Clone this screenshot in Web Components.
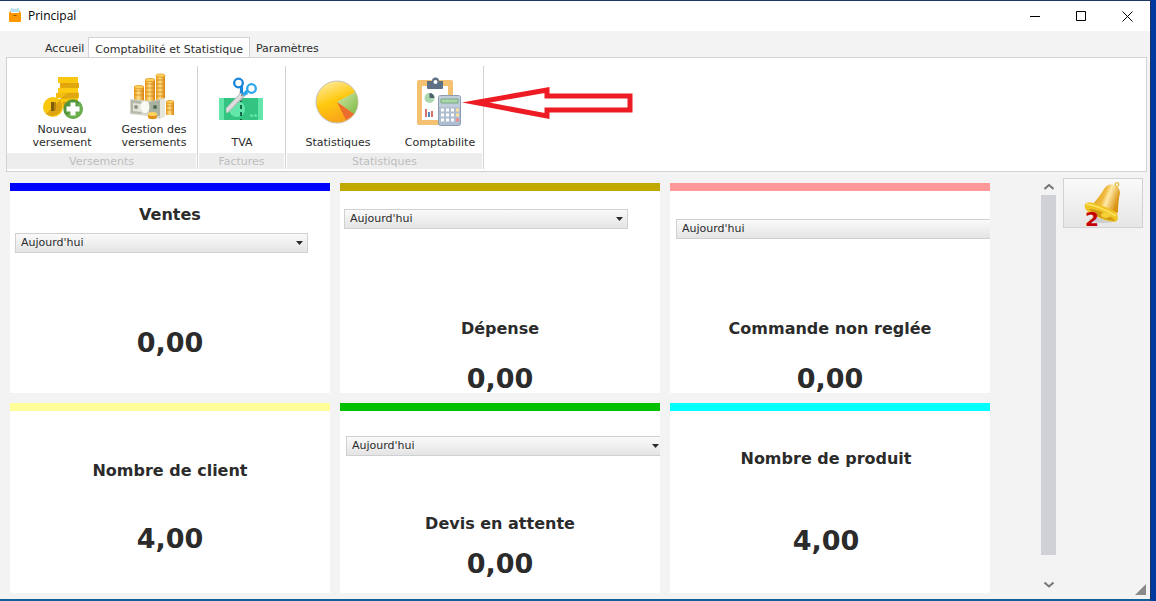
<!DOCTYPE html>
<html lang="fr">
<head>
<meta charset="utf-8">
<title>Principal</title>
<style>
html, body { margin: 0; height: 100%; }
body { font: 11px/14px Verdana, "DejaVu Sans", sans-serif; color: #2b2b2b; background: #003a9f; overflow: hidden; }
</style>
</head>
<body>
<app-window>
  <title-bar slot="title">Principal</title-bar>
  <tab-strip slot="tabs"></tab-strip>
  <ribbon-panel slot="ribbon">
    <ribbon-group label="Versements" style="--start:13px;--gap:8px">
      <ribbon-button icon="coins">Nouveau<br>versement</ribbon-button>
      <ribbon-button icon="cash">Gestion des<br>versements</ribbon-button>
    </ribbon-group>
    <ribbon-group label="Factures" style="--start:1px">
      <ribbon-button icon="tax">TVA</ribbon-button>
    </ribbon-group>
    <ribbon-group label="Statistiques" style="--start:9px;--gap:18px">
      <ribbon-button icon="pie">Statistiques</ribbon-button>
      <ribbon-button icon="report">Comptabilite</ribbon-button>
    </ribbon-group>
    <pointer-arrow></pointer-arrow>
  </ribbon-panel>
  <dash-board>
    <stat-card heading="Ventes" value="0,00" picker="after" style="--accent:#0000ff;--top:12px;--mid:6px;--low:76px;--inset:5px;--picker:calc(100% - 27px)"></stat-card>
    <stat-card heading="Dépense" value="0,00" picker="before" style="--accent:#c0aa00;--top:18px;--mid:88px;--low:24px;--inset:4px;--picker:calc(100% - 36px)"></stat-card>
    <stat-card heading="Commande non reglée" value="0,00" picker="before" style="--accent:#ff9999;--top:28px;--mid:78px;--low:24px;--inset:6px;--picker:calc(100% + 10px)"></stat-card>
    <stat-card heading="Nombre de client" value="4,00" style="--accent:#ffff99;--top:48px;--low:42px"></stat-card>
    <stat-card heading="Devis en attente" value="0,00" picker="before" style="--accent:#00c000;--top:25px;--mid:56px;--low:14px;--inset:6px;--picker:calc(100% - 2px)"></stat-card>
    <stat-card heading="Nombre de produit" value="4,00" style="--accent:#00ffff;--top:36px;--low:56px;--end:8px"></stat-card>
  </dash-board>
  <scroll-rail slot="rail"></scroll-rail>
  <alert-bell slot="side" count="2"></alert-bell>
</app-window>
<script>
const define = (name, render) => customElements.define(name, class extends HTMLElement {
  connectedCallback() {
    if (this.shadowRoot) return;
    this.attachShadow({ mode: 'open' }).innerHTML =
      '<style>*{box-sizing:border-box}button{font:inherit;color:inherit;background:none;border:0;padding:0;margin:0}svg{display:block}</style>' + render(this);
  }
});

const icons = {
  coins: `<svg width="44" height="48" viewBox="-2 0 44 48">
    <path d="M16 5h20v6H16z" fill="#f9c80e"/><path d="M18 11h19v5H18z" fill="#e3a50b"/>
    <path d="M16 16l20-1v6H16z" fill="#fccb12"/><path d="M14 21l22-1 1 6-23 0z" fill="#f4bd0c"/>
    <path d="M29 11l-6 5h14v-5zM25 21h12l-1 6H18z" fill="#e0a810"/>
    <path d="M17 27l19-1v10H15z" fill="#fac80e"/><path d="M21 30h14v6H22z" fill="#d89b10"/>
    <circle cx="11" cy="35" r="10" fill="#f9c80e"/><path d="M18 28a10 10 0 0 1-14 14z" fill="#dda514"/>
    <path d="M9 30h3v9H9z" fill="#805c0c"/><path d="M12 30h2v8l-2 1z" fill="#b98512"/>
    <circle cx="31" cy="37" r="9.700" fill="#54963d"/><path d="M38 30a9.700 9.700 0 0 1-14 14z" fill="#6aae4d"/>
    <path d="M28.500 30.500h5v4h4v5h-4v4h-5v-4h-4v-5h4z" fill="#fff"/></svg>`,
  cash: `<svg width="46" height="48" viewBox="2 0 46 48" overflow="visible">
    <defs><linearGradient id="g"><stop stop-color="#e99a16"/><stop offset=".45" stop-color="#ffe08a"/><stop offset="1" stop-color="#d9800b"/></linearGradient></defs>
    <path d="M5 15h10v20H5z" fill="url(#g)"/><path d="M16 8h10v25H16z" fill="url(#g)"/><path d="M27 3h9v35h-9z" fill="url(#g)"/><path d="M37 30h8v13h-8z" fill="url(#g)"/>
    <g fill="#ffd25a" stroke="#dc8d12" stroke-width=".7"><ellipse cx="10" cy="15" rx="5" ry="1.600"/><ellipse cx="21" cy="8" rx="5" ry="1.600"/><ellipse cx="31.500" cy="3.500" rx="4.700" ry="1.600"/><ellipse cx="41" cy="30" rx="4" ry="1.500"/></g>
    <path d="M5 19h10M5 23h10M16 12h10M16 16h10M16 20h10M16 24h10M27 8h9M27 12h9M27 16h9M27 20h9M27 24h9M37 34h8M37 38h8" stroke="#d8850f" stroke-width=".8"/>
    <path d="M1 27l22 2 13-3v18l-5 3-12-3-18-2z" fill="#d5d6c9"/><path d="M2 28l10 1v13L2 41z" fill="#b4b8aa"/><path d="M4 31l8 1v8l-8-1z" fill="#e4e5da"/>
    <path d="M20 30l11-2v16l-11-1z" fill="#a9b1a0"/><path d="M31 28l5-2v18l-5 3z" fill="#e6e6dc"/><ellipse cx="16" cy="35" rx="4.500" ry="6" fill="#fafaf5"/><circle cx="7" cy="35" r="2" fill="#8b9482"/><circle cx="26" cy="35" r="2" fill="#4d6c4e"/>
    <path d="M19 42v3c0 3 9 3 9 0v-3z" fill="#e09018"/><ellipse cx="23.500" cy="42" rx="4.500" ry="2" fill="#ffd45e"/></svg>`,
  tax: `<svg width="46" height="54" viewBox="1 -2 46 54">
    <path d="M1 24h44v22H1z" fill="#33c481"/><path d="M1 24h5v22H1zM40 24h5v22h-5z" fill="#62e6aa"/><circle cx="19" cy="35" r="8" fill="#62e6aa"/>
    <path d="M23 24v22" stroke="#116849" stroke-width="2" stroke-dasharray="4 3"/><circle cx="33.500" cy="41.500" r="1.500" fill="#62e6aa"/><circle cx="37.500" cy="41.500" r="1.500" fill="#62e6aa"/>
    <path d="M22 15l3 2-1 10-3-2z" fill="#999"/><path d="M24 17l5 3L11 38l-3 1v-5z" fill="#b5b5b5"/><path d="M26 21L9 39l-1-4 15-16z" fill="#ddd"/>
    <circle cx="20.500" cy="9" r="4.300" fill="#fff" stroke="#1684db" stroke-width="2.300"/><path d="M22 13l3-2v9l-3-1z" fill="#1684db"/>
    <circle cx="33.500" cy="14.500" r="4.300" fill="#fff" stroke="#2ba7eb" stroke-width="2.300"/><path d="M24 20l5-5 1 5-4 2z" fill="#2ba7eb"/><circle cx="24" cy="21" r="1" fill="#777"/></svg>`,
  pie: `<svg width="46" height="54" viewBox="0 -2 46 54"><defs><linearGradient id="p" x2=".4" y2="1"><stop stop-color="#fff0b5"/><stop offset=".55" stop-color="#ffc90e"/><stop offset="1" stop-color="#f9a51a"/></linearGradient><linearGradient id="q" y2="1"><stop stop-color="#d5e6ad"/><stop offset="1" stop-color="#7dbb42"/></linearGradient></defs>
    <circle cx="22" cy="28" r="21" fill="url(#p)" stroke="#c3c2bd"/><path d="M22 28l18-10a21 21 0 0 1-1 22z" fill="url(#q)"/><path d="M22 28l17 12a21 21 0 0 1-8 6z" fill="#ec6c2d"/></svg>`,
  report: `<svg width="46" height="54" viewBox="0 -6 46 54">
    <rect y="2" width="36" height="45" rx="2" fill="#f4c071"/><path d="M5 8h26v34H5z" fill="#fff"/><path d="M10 3h5a3.500 3.500 0 0 1 7 0h4v7q0 1-1 1H11q-1 0-1-1z" fill="#5e7085"/><circle cx="18.500" cy="4" r="2" fill="#fff"/>
    <circle cx="12.500" cy="20" r="5" fill="#abd7ad"/><path d="M12.500 20v-5a5 5 0 0 1 5 5z" fill="#4f6471"/>
    <path d="M8 31h2v8H8zM14 33h2v6h-2z" fill="#d6706a"/><path d="M11 34h2v5h-2z" fill="#4d86c0"/>
    <rect x="21.500" y="17.500" width="22" height="30" rx="2" fill="#aebdd0" stroke="#8b9db2"/><path d="M22 18h21v11H22z" fill="#c0ccda"/><path d="M24 21h17v4H24z" fill="#abd7ad" stroke="#74a982"/>
    <path d="M24 32h13M24 37h13M24 42h13" stroke="#fff" stroke-width="3" stroke-dasharray="3 2"/><path d="M39 32h3M39 37h3" stroke="#ffe09b" stroke-width="3"/><path d="M39 42h3" stroke="#f18b86" stroke-width="3"/></svg>`
};

define('app-window', () => `<style>
:host{display:flex;flex-direction:column;height:100vh;box-sizing:border-box;margin-right:5px;border:solid #1d3560;border-width:1px 1px 2px 0;border-bottom-color:#10619a;background:#f3f3f3;position:relative}
main{flex:1;display:flex;min-height:0;padding:6px 7px 6px 10px}
.view{flex:1;min-width:0;padding-top:5px;margin-right:51px;display:flex}
.rail{display:flex;margin-right:7px}
.grip{position:absolute;right:4px;bottom:4px}
</style><slot name="title"></slot><slot name="tabs"></slot><slot name="ribbon"></slot>
<main><div class="view"><slot></slot></div><div class="rail"><slot name="rail"></slot></div><slot name="side"></slot></main>
<svg class="grip" width="11" height="11"><path d="M11 0v11H0z" fill="#8a8a8a"/></svg>`);

define('title-bar', () => `<style>
:host{display:flex;align-items:center;height:30px;flex:none;background:#fff;color:#000;font:12px/16px "Segoe UI","Open Sans",sans-serif}
.logo{margin:0 6px 2px 8px}.name{flex:1}
button{width:46px;height:30px;display:grid;place-items:center}
</style><svg class="logo" width="14" height="16" viewBox="0 0 14 16"><path d="M2 5l1-4 4 1 4-1 1 4z" fill="#b7dff2"/><path d="M1 5.500L3 4v2h8V4l2 1.500V14q0 1-1 1H2q-1 0-1-1z" fill="#ff9800"/><path d="M5.500 8h3v1h-3z" fill="#9a5700"/></svg>
<span class="name"><slot></slot></span>
<button aria-label="Réduire"><svg width="10" height="10" stroke="#000"><path d="M0 5.500h10"/></svg></button>
<button aria-label="Agrandir"><svg width="10" height="10" fill="none" stroke="#000"><path d="M.5.5h9v9h-9z"/></svg></button>
<button aria-label="Fermer"><svg width="11" height="11" stroke="#000"><path d="M.5.5l10 10M10.500.5l-10 10"/></svg></button>`);

define('tab-strip', () => `<style>
:host{display:flex;align-items:flex-end;height:26px;flex:none;padding-left:42px}
button{height:20px;padding:3px 3px 0;white-space:nowrap}
[aria-selected=true]{background:#fff;border:1px solid #d0d2d5;border-bottom:0;height:21px;padding:3px 6px 0;margin:0 3px -1px 1px;position:relative}
</style><button role="tab">Accueil</button><button role="tab" aria-selected="true">Comptabilité et Statistique</button><button role="tab">Paramètres</button>`);

define('ribbon-panel', () => `<style>
:host{display:flex;flex:none;margin:0 3px 0 6px;padding:8px 0 2px;border:1px solid #d0d2d5;background:#fff;position:relative}
::slotted(pointer-arrow){position:absolute;left:455px;top:26px}
</style><slot></slot>`);

define('ribbon-group', el => `<style>
:host{display:flex;flex-direction:column;border-right:1px solid #d0d2d5;padding-right:1px;margin-right:1px;gap:3px}
.row{display:flex;gap:var(--gap,0);padding-left:var(--start)}
.label{height:16px;line-height:17px;text-align:center;background:#ededed;color:#bdbdbd}
</style><div class="row"><slot></slot></div><div class="label">${el.getAttribute('label')}</div>`);

define('ribbon-button', el => `<style>
:host{display:flex}
button{width:84px;height:84px;display:flex;flex-direction:column;justify-content:space-between;align-items:center;line-height:13px;white-space:nowrap;padding:6px 0 1px}
</style><button>${icons[el.getAttribute('icon')]}<span><slot></slot></span></button>`);

define('pointer-arrow', () => `<svg width="172" height="38" viewBox="0 0 172 38" fill="none" stroke="#ed1c24" stroke-width="5" stroke-miterlimit="12"><path d="M14 18.500L85 6v6h83v14H85v6z"/></svg>`);

define('dash-board', () => `<style>
:host{flex:1;min-width:0;display:grid;grid-template-columns:repeat(3,minmax(0,1fr));grid-auto-rows:210px;gap:10px;overflow:hidden}
</style><slot></slot>`);

define('stat-card', el => {
  const name = el.getAttribute('heading');
  const mode = el.getAttribute('picker');
  const heading = mode ? `<label for="period">${name}</label>` : `<h2>${name}</h2>`;
  const picker = `<div class="picker"><select id="period"><option>Aujourd'hui</option></select><svg width="7" height="4"><path d="M0 0h7L3.500 4z" fill="#2b2b2b"/></svg></div>`;
  const head = mode === 'after' ? heading + picker : mode === 'before' ? picker + heading : heading;
  return `<style>
:host{display:block;overflow:hidden;background:#fff;border-top:8px solid var(--accent);padding-top:var(--top);box-sizing:border-box}
label,h2{display:block;margin:0 var(--end,0) 0 0;font-weight:bold;font-size:16px;line-height:24px;text-align:center}
.head{display:flex;flex-direction:column;gap:var(--mid,0)}
output{display:block;margin:var(--low) var(--end,0) 0 0;font-weight:bold;font-size:27px;line-height:28px;text-align:center}
.picker{display:grid;align-items:center;width:var(--picker);margin-left:var(--inset)}
.picker>*{grid-area:1/1}
.picker svg{justify-self:end;margin-right:5px;pointer-events:none}
select{appearance:none;width:100%;height:20px;padding:0 5px;border:1px solid #cfd0d2;border-radius:0;font:inherit;color:inherit;background:linear-gradient(#fafafa,#e4e4e4)}
</style><div class="head">${head}</div><output>${el.getAttribute('value')}</output>`;
});

define('scroll-rail', () => `<style>
:host{display:flex;flex-direction:column;width:15px}
button{height:17px;display:grid;place-items:center;flex:none;width:15px}
.track{flex:1;display:flex;flex-direction:column}.thumb{flex:17;background:#d0d1d6}.rest{flex:1}
</style><button aria-label="Haut"><svg width="10" height="6" fill="none" stroke="#777" stroke-width="2"><path d="M.5 5L5 1l4.500 4"/></svg></button>
<div class="track"><div class="thumb"></div><div class="rest"></div></div>
<button aria-label="Bas"><svg width="10" height="6" fill="none" stroke="#777" stroke-width="2"><path d="M.5.5L5 4.500l4.500-4"/></svg></button>`);

define('alert-bell', el => `<style>
:host{display:block;flex:none;width:80px}
button{display:grid;place-items:center;width:100%;height:50px;border:1px solid #d0d2d5;background:linear-gradient(#fafafa,#e6e6e6);position:relative}
b{position:absolute;left:21px;bottom:-2px;font:bold 20px/20px "DejaVu Sans",sans-serif;color:#c40000}
</style><button aria-label="Notifications"><svg width="40" height="44" viewBox="0 0 40 44"><defs><linearGradient id="b" x2="1" y2=".4"><stop stop-color="#d9930f"/><stop offset=".5" stop-color="#f0ba3d"/><stop offset=".65" stop-color="#ffe9a8"/><stop offset="1" stop-color="#d8920d"/></linearGradient></defs>
<ellipse cx="20" cy="39" rx="14" ry="3" fill="#bbb" opacity=".6"/><circle cx="34" cy="3.500" r="1.800" fill="none" stroke="#e8b93e" stroke-width="1.300"/>
<path d="M9 24Q17 15 21 8q4-6 10-4 6 2 6 8-2 8-2 20z" fill="url(#b)"/><path d="M2 23q3-3 8-1 12 3 23 9 3 4 1 9-4 2-12-1Q8 34 3 29q-2-3-1-6z" fill="#efc322"/><path d="M6 28q7 0 15 4 7 3 11 8-6 0-13-3Q9 34 6 28z" fill="#d29a12"/><path d="M3 23q14 2 30 12" fill="none" stroke="#ffe469" stroke-width="1.500"/><ellipse cx="23" cy="34" rx="5" ry="3" fill="#f4cf38"/></svg><b>${el.getAttribute('count')}</b></button>`);
</script>
</body>
</html>
